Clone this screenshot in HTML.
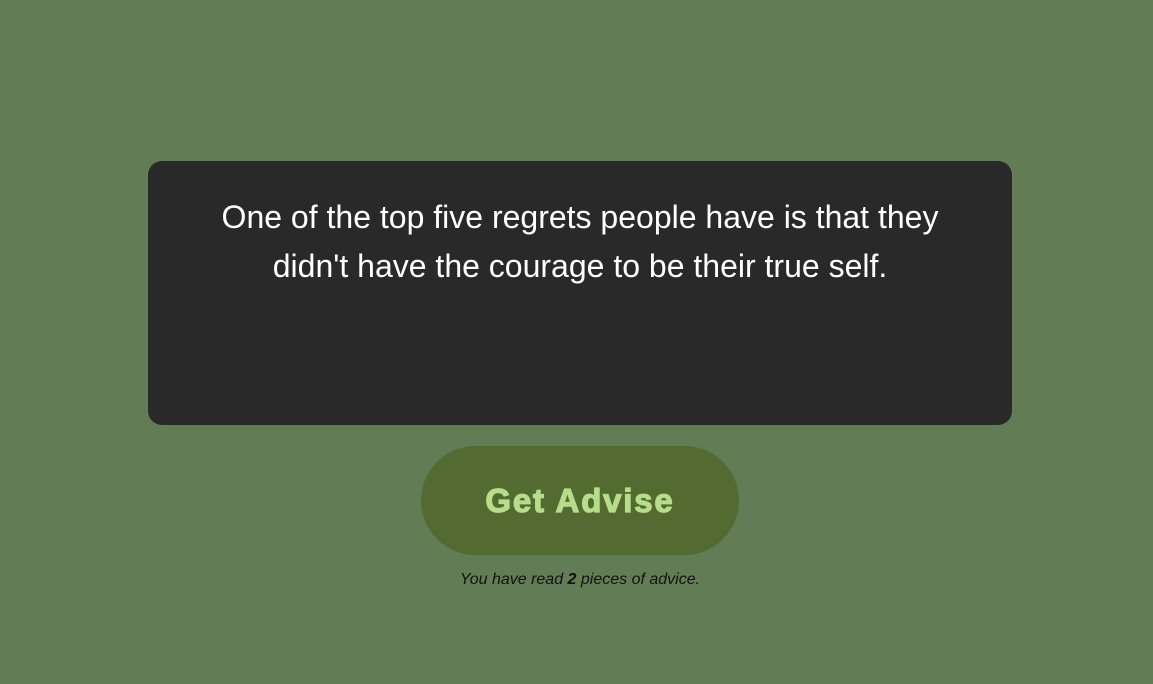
<!DOCTYPE html>
<html><head><style>
html,body{margin:0;padding:0;width:1153px;height:684px;background:#627d55;font-family:"Liberation Sans",Arial,sans-serif;overflow:hidden}
.card{position:absolute;left:148px;top:161px;width:864px;height:264px;background:#292929;border-radius:14px;color:#fff}
.q{position:absolute;left:0;right:0;top:32px;font-size:32px;line-height:49px;text-align:center}
.btn{position:absolute;left:421px;top:446px;width:318px;height:109px;border-radius:55px;background:#536b30;color:#b8dd8a;font-weight:bold;font-size:33px;letter-spacing:1.8px;-webkit-text-stroke:1.2px #b8dd8a;text-align:center;line-height:109px}
.note{position:absolute;left:148px;width:864px;top:571px;text-align:center;font-size:16px;font-style:italic;color:#111}
</style></head><body>
<div class="card"><div class="q">One of the top five regrets people have is that they<br>didn't have the courage to be their true self.</div></div>
<div class="btn">Get Advise</div>
<div class="note">You have read <b>2</b> pieces of advice.</div>
</body></html>
